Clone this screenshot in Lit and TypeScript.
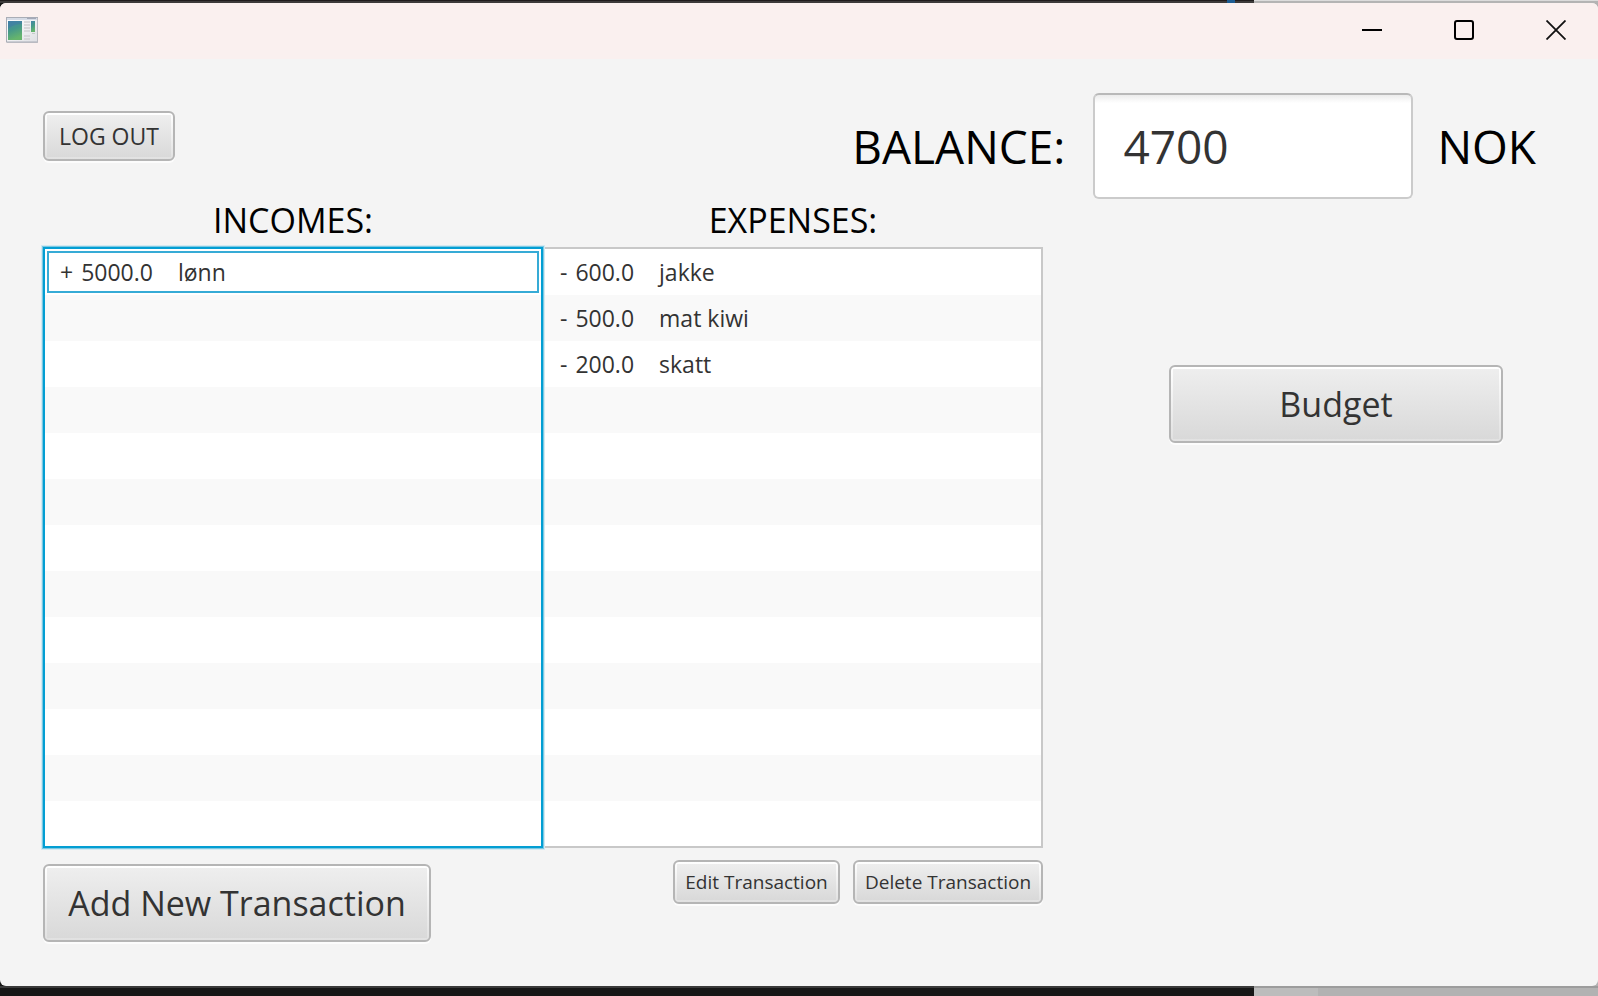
import { LitElement, html, css, svg } from "lit";
import { customElement, property } from "lit/decorators.js";

interface Entry {
  sign: string;
  amount: string;
  note: string;
}

const incomes: Entry[] = [{ sign: "+", amount: "5000.0", note: "lønn" }];

const expenses: Entry[] = [
  { sign: "-", amount: "600.0", note: "jakke" },
  { sign: "-", amount: "500.0", note: "mat kiwi" },
  { sign: "-", amount: "200.0", note: "skatt" },
];

@customElement("transaction-list")
export class TransactionList extends LitElement {
  @property({ attribute: false }) entries: Entry[] = [];
  @property() heading = "";
  @property({ type: Boolean, reflect: true }) active = false;

  static styles = css`
    :host {
      display: flex;
      flex-direction: column;
      min-width: 0;
    }
    .heading {
      margin: 0;
      font-size: 34px;
      line-height: 42px;
      font-weight: 400;
      color: #000;
      text-align: center;
      padding-bottom: 6px;
    }
    .rows {
      flex: 1;
      margin: 0;
      padding: 0;
      list-style: none;
      border: 2px solid #c8c8c8;
      background: repeating-linear-gradient(#fff 0 46px, #f9f9f9 46px 92px);
    }
    :host([active]) .rows {
      border-color: #039ed3;
      box-shadow: 0 0 0 1px #7cc9e3, 0 0 0 2px #d3e9f1;
      z-index: 1;
    }
    .row {
      box-sizing: border-box;
      height: 46px;
      padding: 0 15px;
      display: flex;
      align-items: center;
      color: #333;
      font-size: 23px;
      line-height: 32px;
    }
    .row .sign {
      margin-right: 8px;
    }
    .row .note {
      margin-left: 25px;
    }
    :host([active]) .row:first-child {
      height: 42px;
      margin: 2px;
      padding: 0 11px;
      border: 2px solid #36abd6;
    }
  `;

  render() {
    return html`
      <h2 class="heading" id="heading">${this.heading}</h2>
      <ul class="rows" aria-labelledby="heading">
        ${this.entries.map(
          (e) => html`<li class="row">
            <span class="sign">${e.sign}</span><span>${e.amount}</span><span class="note">${e.note}</span>
          </li>`
        )}
      </ul>
    `;
  }
}

@customElement("app-root")
export class AppRoot extends LitElement {
  static styles = css`
    :host {
      display: flex;
      flex-direction: column;
      box-sizing: border-box;
      min-height: 100vh;
      padding: 3px 0 10px;
      font-family: "Open Sans", "Noto Sans", sans-serif;
      background:
        linear-gradient(90deg, transparent 76.8%, #1c5c92 76.8% 77.3%, transparent 77.3%) 0 0 / 100% 3px no-repeat,
        linear-gradient(90deg, #3c3a3a 78.45%, #b4b4b4 78.45%) 0 1px / 100% 2px no-repeat,
        linear-gradient(90deg, #1f1c1d 78.45%, #dcdcdc 78.45%) 0 0 / 100% 1px no-repeat,
        linear-gradient(90deg, #3a3a3a 78.45%, #9c9c9c 78.45%) 0 calc(100% - 8px) / 100% 2px no-repeat,
        linear-gradient(90deg, #161616 78.45%, #bcbcbc 78.45% 82.5%, #b2b2b2 82.5%);
    }
    .window {
      flex: 1;
      display: flex;
      flex-direction: column;
      background: #f4f4f4;
      border-radius: 6px;
      overflow: hidden;
    }
    .titlebar {
      box-sizing: border-box;
      display: flex;
      align-items: center;
      justify-content: space-between;
      height: 56px;
      padding: 0 32px 2px 6px;
      background: #faf0ef;
    }
    .controls {
      display: flex;
      gap: 72px;
    }
    .control {
      display: block;
      width: 20px;
      height: 20px;
      padding: 0;
      border: 0;
      background: none;
    }
    .glyph {
      display: block;
    }
    .content {
      flex: 1;
      display: flex;
      flex-direction: column;
      padding: 34px 62px 44px 43px;
    }
    .top {
      display: flex;
      align-items: center;
    }
    .btn {
      box-sizing: border-box;
      font-family: inherit;
      color: #333;
      border: 2px solid #b5b5b5;
      border-radius: 6px;
      background:
        linear-gradient(#eeeeee, #d9d9d9) 2px 2px / calc(100% - 4px) calc(100% - 4px) no-repeat padding-box,
        linear-gradient(#ffffff, #e1e1e1) padding-box;
      box-shadow: 0 2px 0 #fcfcfc;
      white-space: nowrap;
      padding: 0;
    }
    .medium {
      font-size: 23px;
      line-height: 32px;
      height: 50px;
      min-width: 132px;
      margin-bottom: 20px;
    }
    .large {
      font-size: 34px;
      line-height: 48px;
      height: 78px;
    }
    .small {
      font-size: 19px;
      line-height: 26px;
      height: 44px;
    }
    .balance {
      margin-left: auto;
      display: flex;
      align-items: center;
      font-size: 46px;
      line-height: 64px;
      color: #000;
    }
    .amount {
      box-sizing: border-box;
      width: 320px;
      height: 106px;
      margin: 0 24px 0 28px;
      padding: 0 28px;
      border: 2px solid #cbcbcb;
      border-top-color: #b9b9b9;
      border-radius: 6px;
      background: linear-gradient(#ececec, #fff 8px);
      font: inherit;
      color: #333;
      outline: none;
    }
    .body {
      flex: 1;
      display: grid;
      grid-template-columns: minmax(0, 1000fr) minmax(0, 493fr);
    }
    .ledger {
      display: flex;
      flex-direction: column;
    }
    .lists {
      flex: 1;
      display: grid;
      grid-template-columns: 1fr 1fr;
    }
    .actions {
      display: flex;
      align-items: flex-start;
      gap: 13px;
      padding-top: 12px;
    }
    .add {
      width: 388px;
      margin: 4px auto 0 0;
    }
    .edit {
      width: 167px;
    }
    .delete {
      width: 190px;
    }
    .side {
      display: flex;
      align-items: flex-start;
      justify-content: center;
      padding: 166px 0 0 93px;
    }
    .budget {
      width: 334px;
    }
  `;

  private appIcon() {
    return html`<svg class="glyph" width="32" height="26" viewBox="0 0 32 26" aria-hidden="true">
      ${svg`
        <defs>
          <linearGradient id="pane" x1="0" y1="0" x2="0.3" y2="1">
            <stop offset="0" stop-color="#4583a8" />
            <stop offset="0.5" stop-color="#45988a" />
            <stop offset="1" stop-color="#66b56c" />
          </linearGradient>
          <linearGradient id="frame" x1="0" y1="0" x2="1" y2="1">
            <stop offset="0" stop-color="#ffffff" />
            <stop offset="1" stop-color="#dfe0e4" />
          </linearGradient>
        </defs>
        <rect x="0.5" y="0.5" width="31" height="24.5" fill="url(#frame)" stroke="#a9adb6" />
        <path d="M1 25.5H31.5V1" fill="none" stroke="#b9bac1" />
        <rect x="1" y="1" width="30" height="2" fill="#d5dbe6" />
        <rect x="21" y="0.5" width="9" height="1.5" fill="#a4a9b8" />
        <rect x="2" y="4" width="14" height="19" fill="url(#pane)" />
        <path d="M2 12C6 8 11 7 16 7V4H2Z" fill="#3f79a8" opacity="0.5" />
        <path d="M18 5h6M18 8h6M18 11h6M18 14h6M18 19h6M18 22h6" stroke="#cfd0d2" stroke-width="1.5" />
        <rect x="25" y="4" width="4" height="11" fill="url(#pane)" />
        <path d="M26 16.5h3" stroke="#c5cbc9" />
      `}
    </svg>`;
  }

  render() {
    return html`
      <div class="window">
        <header class="titlebar">
          ${this.appIcon()}
          <div class="controls">
            <button class="control" aria-label="Minimize">
              <svg class="glyph" width="20" height="20"><path d="M0 10H20" stroke="#000" stroke-width="2" /></svg>
            </button>
            <button class="control" aria-label="Maximize">
              <svg class="glyph" width="20" height="20">
                <rect x="1" y="1" width="18" height="18" rx="2" fill="none" stroke="#000" stroke-width="2" />
              </svg>
            </button>
            <button class="control" aria-label="Close">
              <svg class="glyph" width="20" height="20">
                <path d="M0.5 0.5L19.5 19.5M19.5 0.5L0.5 19.5" stroke="#111" stroke-width="1.8" />
              </svg>
            </button>
          </div>
        </header>
        <main class="content">
          <div class="top">
            <button class="btn medium">LOG OUT</button>
            <div class="balance">
              <label for="amount">BALANCE:</label>
              <input class="amount" id="amount" type="text" .value=${"4700"} />
              <span>NOK</span>
            </div>
          </div>
          <div class="body">
            <section class="ledger">
              <div class="lists">
                <transaction-list heading="INCOMES:" .entries=${incomes} active></transaction-list>
                <transaction-list heading="EXPENSES:" .entries=${expenses}></transaction-list>
              </div>
              <div class="actions">
                <button class="btn large add">Add New Transaction</button>
                <button class="btn small edit">Edit Transaction</button>
                <button class="btn small delete">Delete Transaction</button>
              </div>
            </section>
            <aside class="side">
              <button class="btn large budget">Budget</button>
            </aside>
          </div>
        </main>
      </div>
    `;
  }
}
